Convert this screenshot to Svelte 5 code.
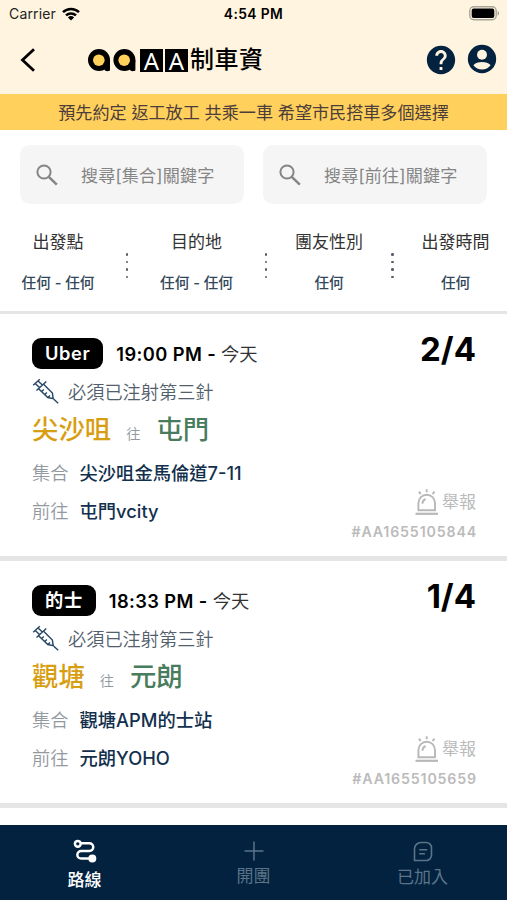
<script lang="ts">
  interface Ride {
    id: string;
    type: string;
    time: string;
    day: string;
    note: string;
    from: string;
    to: string;
    meet: string;
    dest: string;
    seats: string;
  }

  const filters = [
    { label: '出發點', value: '任何 - 任何' },
    { label: '目的地', value: '任何 - 任何' },
    { label: '團友性別', value: '任何' },
    { label: '出發時間', value: '任何' }
  ];

  const rides: Ride[] = [
    {
      id: '#AA1655105844',
      type: 'Uber',
      time: '19:00 PM',
      day: '今天',
      note: '必須已注射第三針',
      from: '尖沙咀',
      to: '屯門',
      meet: '尖沙咀金馬倫道7-11',
      dest: '屯門vcity',
      seats: '2/4'
    },
    {
      id: '#AA1655105659',
      type: '的士',
      time: '18:33 PM',
      day: '今天',
      note: '必須已注射第三針',
      from: '觀塘',
      to: '元朗',
      meet: '觀塘APM的士站',
      dest: '元朗YOHO',
      seats: '1/4'
    }
  ];

  let meetQuery = $state('');
  let destQuery = $state('');
  let activeTab = $state('routes');
</script>

{#snippet searchIcon()}
  <svg class="search-icon" width="22" height="22" viewBox="0 0 22 22" fill="none" stroke="#858585" stroke-width="2">
    <circle cx="8" cy="8" r="6.6"></circle>
    <path d="M12.8 12.8l8 7.8" stroke-width="2.5"></path>
  </svg>
{/snippet}

<div class="app">
  <header>
    <div class="status-bar">
      <div class="carrier">
        <span>Carrier</span>
        <svg width="18" height="14" viewBox="0 0 18 14" fill="none" stroke="#000" stroke-width="2.5">
          <path d="M1 5.2a11.4 11.4 0 0 1 16 0"></path>
          <path d="M4 8.4a7.2 7.2 0 0 1 10 0"></path>
          <path d="M9 13.6L5.9 10.5a4.5 4.5 0 0 1 6.2 0z" fill="#000" stroke="none"></path>
        </svg>
      </div>
      <span class="clock">4:54 PM</span>
      <svg class="battery" width="31" height="15" viewBox="0 0 31 15">
        <rect x="0.8" y="0.8" width="26.4" height="13" rx="4" fill="#fff4df" stroke="#aaa59a" stroke-width="1.4"></rect>
        <rect x="2.7" y="2.6" width="22.6" height="9.4" rx="2" fill="#000"></rect>
        <path d="M28.6 5v4.6c2-.8 2-3.8 0-4.6z" fill="#aaa59a"></path>
      </svg>
    </div>

    <div class="nav-bar">
      <button class="btn-back" title="返回">
        <svg width="16" height="24" viewBox="0 0 16 24" fill="none" stroke="#000" stroke-width="2.8">
          <path d="M14 1.2L2.5 12 14 22.8"></path>
        </svg>
      </button>
      <div class="brand">
        <svg width="49" height="23" viewBox="0 0 49 23">
          <circle cx="11" cy="11" r="11" fill="#000"></circle>
          <path d="M15 11h7v8q0 2.8-.2 2.8-4.5 1.4-5.5-1.3z" fill="#000"></path>
          <circle cx="10.8" cy="11.2" r="5.8" fill="#ffd05a"></circle>
          <circle cx="36.4" cy="11" r="11" fill="#000"></circle>
          <path d="M40.4 11h7v8q0 2.8-.2 2.8-4.5 1.4-5.5-1.3z" fill="#000"></path>
          <circle cx="36.2" cy="11.2" r="5.8" fill="#ffd05a"></circle>
        </svg>
        <span class="tile">A</span>
        <span class="tile">A</span>
        <span class="name">制車資</span>
      </div>
      <div class="nav-actions">
        <button title="說明">
          <svg width="34" height="34" viewBox="0 0 24 24" fill="#02223f">
            <path d="M12 2C6.48 2 2 6.48 2 12s4.48 10 10 10 10-4.48 10-10S17.52 2 12 2zm1 17h-2v-2h2v2zm2.07-7.75l-.9.92C13.45 12.9 13 13.5 13 15h-2v-.5c0-1.1.45-2.1 1.17-2.83l1.24-1.26c.37-.36.59-.86.59-1.41 0-1.1-.9-2-2-2s-2 .9-2 2H8c0-2.21 1.79-4 4-4s4 1.79 4 4c0 .88-.36 1.68-.93 2.25z"></path>
          </svg>
        </button>
        <button class="btn-account" title="帳戶">
          <svg width="34" height="34" viewBox="0 0 24 24">
            <circle cx="12" cy="12" r="10" fill="#02223f"></circle>
            <circle cx="12" cy="9" r="3.5" fill="#fff4df"></circle>
            <path d="M5.9 16.4C7.2 14.9 9.5 14.2 12 14.2s4.8.7 6.1 2.2a7.6 7.6 0 0 1-12.2 0z" fill="#fff4df"></path>
          </svg>
        </button>
      </div>
    </div>
  </header>

  <div class="banner">預先約定 返工放工 共乘一車 希望市民搭車多個選擇</div>

  <div class="search-row">
    <label class="search-box">
      {@render searchIcon()}
      <input type="text" bind:value={meetQuery} placeholder="搜尋[集合]關鍵字" />
    </label>
    <label class="search-box">
      {@render searchIcon()}
      <input type="text" bind:value={destQuery} placeholder="搜尋[前往]關鍵字" />
    </label>
  </div>

  <div class="filters">
    {#each filters as filter, i}
      {#if i > 0}
        <div class="dots"><i></i><i></i><i></i><i></i></div>
      {/if}
      <div class="filter">
        <span class="filter-label">{filter.label}</span>
        <span class="filter-value">{filter.value}</span>
      </div>
    {/each}
  </div>

  <main>
    {#each rides as ride (ride.id)}
      <article class="ride">
        <div class="ride-info">
          <div class="ride-head">
            <span class="ride-type">{ride.type}</span>
            <span class="ride-time">{ride.time} - <span class="ride-day">{ride.day}</span></span>
          </div>
          <div class="ride-note">
            <svg width="27" height="26" viewBox="0 0 27 26" fill="none" stroke="#254665" stroke-width="1.4">
              <path d="M1.2 7.2L7.8 1.2M3.2 5.4l4.6 4.4M6 2.9l4.7 4.4M4.5 12.6l9.8-9"></path>
              <path d="M6.6 10.8l9.2 8.7 5.4 1.2-.8-5.6-8.8-8.9M21 20.5l5.2 4.8"></path>
              <path d="M9.6 13.6l2.2-2M12.7 16.5l2.2-2M15.8 19.4l2.2-2"></path>
            </svg>
            <span>{ride.note}</span>
          </div>
          <div class="ride-route">
            <span class="from">{ride.from}</span>
            <span class="arrow">往</span>
            <span class="to">{ride.to}</span>
          </div>
          <div class="ride-place"><span>集合</span><b>{ride.meet}</b></div>
          <div class="ride-place"><span>前往</span><b>{ride.dest}</b></div>
        </div>
        <div class="ride-side">
          <span class="seats">{ride.seats}</span>
          <button class="btn-report">
            <svg width="24" height="27" viewBox="0 0 24 27" fill="none" stroke="#b8b8b8" stroke-width="1.9">
              <path d="M3.4 21.2V14a8.3 8.3 0 0 1 16.6 0v7.2z"></path>
              <path d="M7.4 14.8q.2-3.6 3.2-4.8M4 2.6l1.7 2.5M11.7.2v3.1M19.4 2.6l-1.8 2.5"></path>
              <path d="M.5 24.8h22.5" stroke-width="2.2"></path>
            </svg>
            舉報
          </button>
          <span class="ride-id">{ride.id}</span>
        </div>
      </article>
    {/each}
  </main>

  <nav class="tab-bar">
    <button class:active={activeTab === 'routes'} onclick={() => (activeTab = 'routes')}>
      <svg width="24" height="24" viewBox="0 0 24 24" fill="none" stroke="currentColor" stroke-width="2.5">
        <circle cx="4.8" cy="4.8" r="2.9"></circle>
        <path d="M7.8 4.2h8.6a3.8 3.8 0 0 1 0 7.7H8.2a3.8 3.8 0 0 0 0 7.7H17"></path>
        <circle cx="19.3" cy="19.4" r="4" fill="currentColor" stroke="none"></circle>
      </svg>
      <span>路線</span>
    </button>
    <button class:active={activeTab === 'create'} onclick={() => (activeTab = 'create')}>
      <svg class="plus" width="20" height="20" viewBox="0 0 20 20" fill="none" stroke="currentColor" stroke-width="1.5">
        <path d="M10 .5v19M.5 10h19"></path>
      </svg>
      <span>開團</span>
    </button>
    <button class:active={activeTab === 'joined'} onclick={() => (activeTab = 'joined')}>
      <svg class="note" width="20" height="21" viewBox="0 0 20 21" fill="none" stroke="currentColor" stroke-width="1.6">
        <path d="M1.5 19.5V8a6.5 6.5 0 0 1 6.5-6.5h5.2A5.3 5.3 0 0 1 18.5 7v7a5.3 5.3 0 0 1-5.3 5.5z"></path>
        <path d="M6.2 8.8h8M6.2 12.7h5.8"></path>
      </svg>
      <span>已加入</span>
    </button>
  </nav>
</div>

<style>
  :global(body) {
    background: #fff;
  }

  .app {
    display: flex;
    flex-direction: column;
    height: 900px;
    overflow: hidden;
    font-family: Inter, "Noto Sans CJK TC", sans-serif;
    color: #000;
  }

  button {
    padding: 0;
    border: none;
    background: transparent;
    font: inherit;
    color: inherit;
    cursor: pointer;
  }

  svg {
    display: block;
    flex: none;
  }

  header {
    height: 94px;
    background: #fff4df;
  }

  .status-bar {
    display: grid;
    grid-template-columns: 1fr auto 1fr;
    align-items: center;
    height: 27px;
    padding: 0 7px 0 9px;
    font-size: 14px;
  }

  .carrier {
    display: flex;
    align-items: center;
    gap: 6px;
    color: #222;
    letter-spacing: 0.15px;
  }

  .clock {
    margin-right: 2px;
    font-size: 13.8px;
    font-weight: 600;
    letter-spacing: 0.4px;
  }

  .battery {
    justify-self: end;
  }

  .nav-bar {
    display: flex;
    align-items: center;
    height: 66px;
    padding: 0 8px 0 20px;
  }

  .brand {
    display: flex;
    align-items: center;
    margin-left: 52px;
  }

  .tile {
    width: 23px;
    height: 23px;
    margin-left: 2px;
    background: #000;
    color: #fff;
    font-family: "Noto Sans", sans-serif;
    font-size: 24px;
    line-height: 23px;
    text-align: center;
  }

  .tile:first-of-type {
    margin-left: 3px;
  }

  .name {
    margin-left: 2px;
    font-size: 24px;
    font-weight: 500;
    line-height: 26px;
    letter-spacing: 0.5px;
  }

  .nav-actions {
    display: flex;
    gap: 7px;
    margin-left: auto;
  }

  .btn-account {
    margin-top: -2px;
  }

  .banner {
    height: 36px;
    background: #ffd05c;
    color: #4d3d3a;
    font-size: 17.1px;
    line-height: 37px;
    text-align: center;
  }

  .search-row {
    display: flex;
    gap: 19px;
    padding: 15px 20px 0;
  }

  .search-box {
    display: flex;
    flex: 1;
    align-items: center;
    box-sizing: border-box;
    min-width: 0;
    height: 59px;
    padding: 0 16px;
    border-radius: 10px;
    background: #f5f5f5;
  }

  .search-box input {
    width: 100%;
    min-width: 0;
    margin-left: 23px;
    padding: 2px 0 0;
    border: none;
    outline: none;
    background: transparent;
    font-family: inherit;
    font-size: 17.1px;
    letter-spacing: 0.15px;
  }

  .search-box input::placeholder {
    color: #858585;
  }

  .filters {
    display: grid;
    grid-template-columns: 116px 22px 117px 22px 104px 23px 103px;
    height: 107px;
    border-bottom: 3px solid #e5e5e5;
  }

  .filter {
    display: flex;
    flex-direction: column;
    align-items: center;
    padding-top: 26px;
    white-space: nowrap;
  }

  .filter-label {
    color: #333;
    font-size: 17px;
    line-height: 24px;
  }

  .filter-value {
    margin-top: 19px;
    color: #33475a;
    font-size: 14.6px;
    font-weight: 500;
    line-height: 20px;
  }

  .dots {
    display: flex;
    flex-direction: column;
    align-items: center;
    gap: 5px;
    padding-top: 49px;
  }

  .dots i {
    width: 2.5px;
    height: 2.5px;
    border-radius: 50%;
    background: #555f69;
  }

  .ride {
    display: flex;
    justify-content: space-between;
    box-sizing: border-box;
    height: 247px;
    padding: 22px 31px 0;
    border-bottom: 5px solid #e5e5e5;
  }

  .ride-info {
    padding-left: 1px;
  }

  .ride-head {
    display: flex;
    align-items: center;
    height: 34px;
  }

  .ride-type {
    padding: 0 13px;
    border-radius: 9px;
    background: #000;
    color: #fff;
    font-size: 18.3px;
    font-weight: 600;
    line-height: 31px;
    letter-spacing: 0.6px;
  }

  .ride-time {
    margin-left: 13px;
    font-size: 18.3px;
    font-weight: 600;
    letter-spacing: 0.4px;
  }

  .ride-day {
    color: #333;
    font-weight: 400;
    letter-spacing: 0;
  }

  .ride-note {
    display: flex;
    align-items: center;
    height: 26px;
    margin-top: 8px;
    color: #52606d;
    font-size: 18.2px;
    font-weight: 350;
  }

  .ride-note span {
    margin-left: 9px;
  }

  .ride-route {
    display: flex;
    align-items: baseline;
    margin-top: 7px;
    font-size: 26.4px;
    font-weight: 500;
    line-height: 36px;
  }

  .from {
    color: #d89e12;
  }

  .arrow {
    margin: 0 16px 0 15px;
    color: #9299a0;
    font-size: 14.2px;
    font-weight: 350;
  }

  .to {
    color: #497c5d;
  }

  .ride-place {
    margin-top: 12px;
    font-size: 18.3px;
    line-height: 26px;
  }

  .ride-route + .ride-place {
    margin-top: 8px;
  }

  .ride-place span {
    margin-right: 11px;
    color: #9299a0;
    font-weight: 350;
  }

  .ride-place b {
    color: #12304d;
    font-weight: 500;
  }

  .ride-side {
    display: flex;
    flex-direction: column;
    align-items: flex-end;
  }

  .seats {
    font-size: 33px;
    font-weight: 700;
    line-height: 27px;
  }

  .btn-report {
    display: flex;
    align-items: center;
    gap: 3px;
    margin-top: 125px;
    color: #bbb;
    font-size: 17px;
    line-height: 28px;
  }

  .ride-id {
    margin-top: 6px;
    margin-right: -1px;
    color: #bbb;
    font-size: 14.2px;
    font-weight: 600;
    line-height: 20px;
    letter-spacing: 0.85px;
  }

  .tab-bar {
    display: grid;
    grid-template-columns: 1fr 1fr 1fr;
    flex: none;
    height: 75px;
    margin-top: auto;
    background: #02223f;
  }

  .tab-bar button {
    display: flex;
    flex-direction: column;
    align-items: center;
    padding-top: 14px;
    color: #5b7488;
    font-size: 17px;
    line-height: 24px;
  }

  .tab-bar button.active {
    color: #fff;
    font-weight: 500;
  }

  .tab-bar span {
    margin-top: 5px;
  }

  .plus,
  .note {
    margin-top: 2px;
  }

  .plus + span,
  .note + span {
    margin-top: 3px;
  }
</style>
